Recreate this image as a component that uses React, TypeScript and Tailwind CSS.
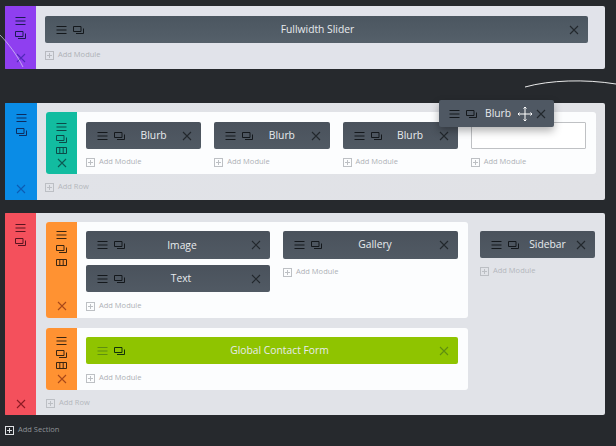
import React from 'react';

const FONT = "font-['Open_Sans','Liberation_Sans',sans-serif]";

function MenuIcon({ className = '' }: { className?: string }) {
  return (
    <svg width="11" height="8" viewBox="0 0 11 8" fill="none" stroke="currentColor" strokeWidth="1" className={`shrink-0 ${className}`}>
      <path d="M0.5 0.5H10.5M0.5 4H10.5M0.5 7.5H10.5" />
    </svg>
  );
}

function CopyIcon({ className = '' }: { className?: string }) {
  return (
    <svg width="11" height="8" viewBox="0 0 11 8" fill="none" stroke="currentColor" strokeWidth="1" className={`shrink-0 ${className}`}>
      <path d="M0.5 0.5H8V5.5H0.5Z" />
      <path d="M10.5 2.5V7.5H3" />
    </svg>
  );
}

function ColumnsIcon({ className = '' }: { className?: string }) {
  return (
    <svg width="11" height="7" viewBox="0 0 11 7" fill="none" stroke="currentColor" strokeWidth="1" className={`shrink-0 ${className}`}>
      <path d="M0.5 0.5H10.5V6.5H0.5ZM3.8 0.5V6.5M7.2 0.5V6.5" />
    </svg>
  );
}

function CloseIcon({ className = '' }: { className?: string }) {
  return (
    <svg width="10" height="10" viewBox="0 0 10 10" fill="none" stroke="currentColor" strokeWidth="1.1" className={`shrink-0 ${className}`}>
      <path d="M1 1L9 9M9 1L1 9" />
    </svg>
  );
}

function MoveIcon() {
  return (
    <svg width="16" height="16" viewBox="0 0 16 16" fill="none" stroke="white" strokeWidth="1" className="shrink-0">
      <path d="M8 1V15M1 8H15" />
      <path d="M6.5 2.5L8 1L9.5 2.5M6.5 13.5L8 15L9.5 13.5M2.5 6.5L1 8L2.5 9.5M13.5 6.5L15 8L13.5 9.5" />
    </svg>
  );
}

function AddLink({
  label,
  className = '',
  tone = 'text-[#aeb1b6]',
  boxTone = '',
}: {
  label: string;
  className?: string;
  tone?: string;
  boxTone?: string;
}) {
  return (
    <div className={`flex h-[10px] items-center gap-[4px] text-[7.5px] ${tone} ${className}`}>
      <span className={`relative h-[9px] w-[9px] shrink-0 border border-current ${boxTone || 'opacity-80'}`}>
        <svg width="7" height="7" viewBox="0 0 7 7" stroke="currentColor" strokeWidth="1" className="absolute top-0 left-0">
          <path d="M3.5 1V6M1 3.5H6" />
        </svg>
      </span>
      <span>{label}</span>
    </div>
  );
}

function Module({
  label,
  className = 'h-[27px]',
  labelClass = '',
  variant = 'gray',
}: {
  label: string;
  className?: string;
  labelClass?: string;
  variant?: 'gray' | 'slate' | 'green';
}) {
  const green = variant === 'green';
  const bg = {
    gray: 'bg-gradient-to-b from-[#4a525c] to-[#515a64]',
    slate: 'bg-gradient-to-b from-[#4b5660] to-[#55606a]',
    green: 'bg-[#8fc400]',
  }[variant];

  return (
    <div className={`flex items-center rounded-[2px] pr-[9px] pl-[11px] ${bg} ${className}`}>
      <MenuIcon className={green ? 'text-[#5f8f10]' : 'text-[#14181c]'} />
      <CopyIcon className={`ml-[6px] ${green ? 'text-[#12320a]' : 'text-[#14181c]'}`} />
      <span className={`flex-1 text-center text-[10.3px] whitespace-nowrap text-[#e8ebee] ${labelClass}`}>{label}</span>
      <CloseIcon className={green ? 'text-[#5f8f10]' : 'text-[#23282d]'} />
    </div>
  );
}

function RowSide({ color, icon, close, layout, spaced = false }: { color: string; icon: string; close: string; layout: string; spaced?: boolean }) {
  return (
    <div className={`flex w-[31px] shrink-0 flex-col items-center rounded-l-[3px] ${color} ${icon} ${layout}`}>
      <MenuIcon />
      <CopyIcon />
      <ColumnsIcon />
      <CloseIcon className={`${close} ${spaced ? 'mt-auto' : ''}`} />
    </div>
  );
}

function SectionSide({ color, icon, close, width = 'w-[31px]' }: { color: string; icon: string; close: string; width?: string }) {
  return (
    <div className={`flex shrink-0 flex-col items-center gap-[6px] rounded-l-[1px] pt-[11px] pb-[6px] ${width} ${color} ${icon}`}>
      <MenuIcon />
      <CopyIcon />
      <CloseIcon className={`mt-auto ${close}`} />
    </div>
  );
}

export default function App() {
  return (
    <div className={`relative h-[446px] w-[616px] overflow-hidden bg-[#26292d] pt-[6px] pl-[5px] ${FONT}`}>
      {/* fullwidth section */}
      <section className="flex h-[63px] w-[600px] rounded-[2px] bg-[#e1e3ea]">
        <SectionSide color="bg-[#8f3ff0]" icon="text-[#1b1a55]" close="text-[#5029b8]" />
        <div className="flex-1 pt-[10px] pr-[17px] pl-[9px]">
          <Module label="Fullwidth Slider" labelClass="pr-[18px]" variant="slate" />
          <AddLink label="Add Module" className="mt-[7px]" />
        </div>
      </section>

      {/* blurb section */}
      <section className="mt-[34px] flex h-[97px] w-[600px] rounded-[2px] bg-gradient-to-r from-[#d9eefa] via-[#e1e3e8] via-[3%] to-[#e1e2e6]">
        <SectionSide color="bg-[#0a8ce6]" icon="text-[#0c2c60]" close="text-[#0c5cb4]" width="w-[32px]" />
        <div className="flex-1 pt-[9px] pr-[9px] pl-[9px]">
          <div className="flex h-[62px] rounded-[3px] bg-[#fcfdfe]">
            <RowSide color="bg-[#12bca0]" icon="text-[#0c4a48]" close="text-[#0c5a54]" layout="gap-[4px] pt-[11px]" />
            <div className="grid flex-1 grid-cols-4 gap-x-[13px] pt-[10px] pr-[10px] pl-[9px]">
              <div>
                <Module label="Blurb" />
                <AddLink label="Add Module" className="mt-[8px]" />
              </div>
              <div>
                <Module label="Blurb" />
                <AddLink label="Add Module" className="mt-[8px]" />
              </div>
              <div>
                <Module label="Blurb" />
                <AddLink label="Add Module" className="mt-[8px]" />
              </div>
              <div>
                <div className="h-[27px] rounded-[1px] border border-[#bfc1c4] bg-white" />
                <AddLink label="Add Module" className="mt-[8px]" />
              </div>
            </div>
          </div>
          <AddLink label="Add Row" className="mt-[8px] -ml-[1px]" tone="text-[#b4b7bc]" />
        </div>
      </section>

      {/* sidebar section */}
      <section className="mt-[13px] flex h-[202px] w-[600px] rounded-[2px] bg-[#e1e3e8]">
        <SectionSide color="bg-[#f4505c]" icon="text-[#5a1420]" close="text-[#8c1a24]" />
        <div className="flex flex-1 pt-[9px] pl-[10px]">
          <div className="w-[422px]">
            <div className="flex h-[96px] rounded-[3px] bg-[#fcfdfe]">
              <RowSide color="bg-[#ff9232]" icon="text-[#3a2510]" close="text-[#a8481a]" layout="gap-[6px] pt-[9px] pb-[7px]" spaced />
              <div className="flex flex-1 gap-[13px] pt-[9px] pl-[9px]">
                <div className="w-[184px]">
                  <Module label="Image" labelClass="pt-[2px] pr-[12px]" className="h-[28px]" />
                  <Module label="Text" labelClass="pr-[14px]" className="mt-[6px] h-[27px]" />
                  <AddLink label="Add Module" className="mt-[9px]" />
                </div>
                <div className="w-[175px]">
                  <Module label="Gallery" labelClass="pr-[11px]" className="h-[28px]" />
                  <AddLink label="Add Module" className="mt-[8px]" />
                </div>
              </div>
            </div>
            <div className="mt-[10px] flex h-[62px] rounded-[3px] bg-[#fcfdfe]">
              <RowSide color="bg-[#ff9232]" icon="text-[#3a2510]" close="text-[#a8481a]" layout="gap-[4.5px] pt-[9px]" />
              <div className="flex-1 pt-[9px] pl-[9px]">
                <Module label="Global Contact Form" variant="green" labelClass="pr-[5px]" className="h-[27px] w-[372px]" />
                <AddLink label="Add Module" className="mt-[9px]" />
              </div>
            </div>
            <AddLink label="Add Row" className="mt-[8px]" tone="text-[#b4b7bc]" />
          </div>
          <div className="ml-[12px] w-[115px] pt-[9px]">
            <Module label="Sidebar" />
            <AddLink label="Add Module" className="mt-[8px]" tone="text-[#b4b7bc]" />
          </div>
        </div>
      </section>

      <AddLink label="Add Section" className="mt-[10px]" tone="text-[#8f9398]" boxTone="border-[#dfe1e4] text-[#dfe1e4]" />

      {/* dragged module */}
      <div className="absolute top-[100px] left-[439px] flex h-[27px] w-[115px] items-center rounded-[2px] bg-[#4f5863] pr-[9px] pl-[10px] shadow-[0_4px_8px_rgba(0,0,0,0.3)]">
        <MenuIcon className="text-[#14181c]" />
        <CopyIcon className="ml-[6px] text-[#14181c]" />
        <span className="ml-[8px] text-[10.3px] text-[#e8ebee]">Blurb</span>
        <span className="ml-[6px]">
          <MoveIcon />
        </span>
        <CloseIcon className="ml-[3px] text-[#23282d]" />
      </div>

      {/* stray sketch lines */}
      <svg width="616" height="446" viewBox="0 0 616 446" fill="none" className="pointer-events-none absolute top-0 left-0">
        <path d="M0 35C8 43 17 55 23 67" stroke="#d8d8f0" strokeWidth="0.7" />
        <path d="M525 87C550 80 585 79 616 84" stroke="white" strokeWidth="0.9" />
      </svg>
    </div>
  );
}
